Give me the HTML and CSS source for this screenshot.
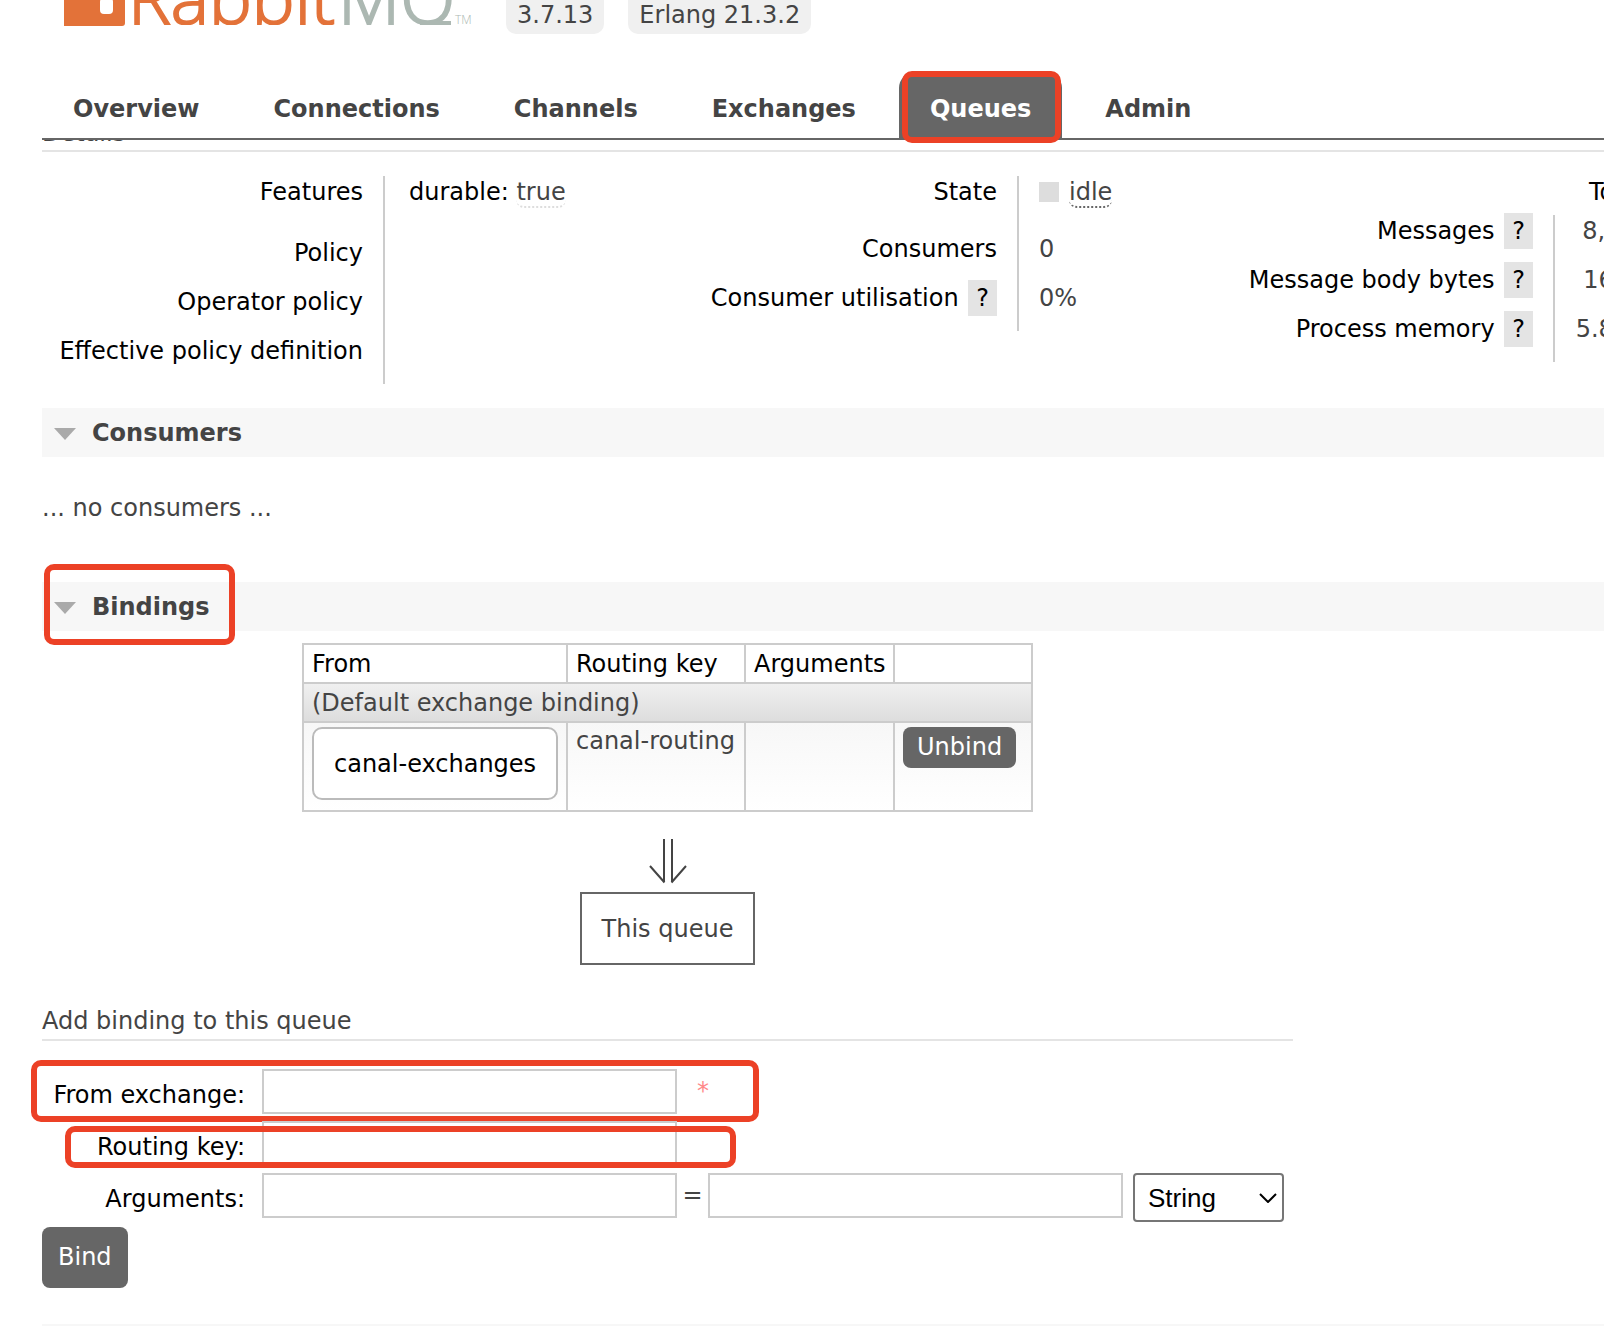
FILE: index.html
```html
<!DOCTYPE html>
<html lang="en">
<head>
<meta charset="utf-8">
<title>RabbitMQ Management</title>
<link rel="stylesheet" href="styles.css">
</head>
<body>
<header class="header">
  <div class="brand">
    <svg class="logo" viewBox="0 0 440 34" role="img" aria-label="RabbitMQ">
      <clipPath id="baseline"><path d="M0 0h440v25H0z"/></clipPath>
      <path fill="#e37239" d="M22 0h61v23q0 3-3 3H22z"/>
      <rect x="58" y="-2" width="13" height="16" rx="4" fill="#fff"/>
      <g clip-path="url(#baseline)">
        <text class="logo-word" x="86" y="24"><tspan class="logo-rabbit">Rabbit</tspan><tspan class="logo-mq" x="296">MQ</tspan></text>
      </g>
      <path class="logo-tail" d="M378 23h31"/>
      <text class="logo-tm" x="413" y="24">TM</text>
    </svg>
    <span class="version">3.7.13</span>
    <span class="version">Erlang 21.3.2</span>
  </div>
  <nav class="tabs">
    <a class="tab" href="#overview">Overview</a>
    <a class="tab" href="#connections">Connections</a>
    <a class="tab" href="#channels">Channels</a>
    <a class="tab" href="#exchanges">Exchanges</a>
    <a class="tab tab-selected" href="#queues">Queues<span class="mark mark-tab"></span></a>
    <a class="tab" href="#admin">Admin</a>
  </nav>
</header>
<main class="main">
  <h3 class="details-title"><span>Details</span></h3>
  <div class="facts-row">
    <table class="facts facts-policy">
      <tr><th>Features</th><td>durable: <abbr>true</abbr></td></tr>
      <tr><th>Policy</th><td></td></tr>
      <tr><th>Operator policy</th><td></td></tr>
      <tr><th>Effective policy definition</th><td></td></tr>
    </table>
    <table class="facts facts-state">
      <tr><th>State</th><td><span class="swatch"></span><abbr class="strong">idle</abbr></td></tr>
      <tr><th>Consumers</th><td>0</td></tr>
      <tr><th>Consumer utilisation <span class="help">?</span></th><td>0%</td></tr>
    </table>
    <table class="facts facts-totals">
      <thead><tr><td></td><th>Total</th></tr></thead>
      <tbody>
        <tr><th>Messages <span class="help">?</span></th><td>8,192</td></tr>
        <tr><th>Message body bytes <span class="help">?</span></th><td>16MB</td></tr>
        <tr><th>Process memory <span class="help">?</span></th><td>5.8MB</td></tr>
      </tbody>
    </table>
  </div>

  <h2 class="section-title"><svg class="caret" viewBox="0 0 22 12"><path d="M0 0h22L11 12z"/></svg>Consumers</h2>
  <p class="empty">... no consumers ...</p>

  <h2 class="section-title"><svg class="caret" viewBox="0 0 22 12"><path d="M0 0h22L11 12z"/></svg>Bindings<span class="mark mark-bindings"></span></h2>
  <div class="bindings">
    <table class="list">
      <colgroup><col class="col-from"><col class="col-key"><col class="col-args"><col></colgroup>
      <thead><tr><th>From</th><th>Routing key</th><th>Arguments</th><th></th></tr></thead>
      <tbody>
        <tr class="default-row"><td colspan="4">(Default exchange binding)</td></tr>
        <tr class="binding-row">
          <td><a class="exchange" href="#canal-exchanges">canal-exchanges</a></td>
          <td>canal-routing</td>
          <td></td>
          <td><button class="button button-small" type="button">Unbind</button></td>
        </tr>
      </tbody>
    </table>
    <svg class="arrow" viewBox="0 0 38 46"><path d="M15 0v43M23 0v43M1 27l14.500 16.500M37 27L22.500 43.500"/></svg>
    <div class="queue">This queue</div>
  </div>

  <form class="bind-form">
    <h3 class="form-title">Add binding to this queue</h3>
    <div class="field">
      <label for="source">From exchange:</label>
      <input id="source" type="text">
      <span class="required">*</span>
      <span class="mark mark-source"></span>
    </div>
    <div class="field">
      <label for="key">Routing key:</label>
      <input id="key" type="text">
      <span class="mark mark-key"></span>
    </div>
    <div class="field">
      <label for="argument">Arguments:</label>
      <input id="argument" type="text">
      <span class="equals">=</span>
      <input aria-label="Argument value" type="text">
      <span class="select-wrap">
        <select aria-label="Argument type"><option>String</option><option>Number</option><option>Boolean</option><option>List</option></select>
        <svg class="chevron" viewBox="0 0 18 10"><path d="M1 1l8 8 8-8"/></svg>
      </span>
    </div>
    <button class="button button-large" type="button">Bind</button>
  </form>
  <div class="next-section"></div>
</main>
</body>
</html>
```
FILE: styles.css
```css
* { box-sizing: border-box; }
body {
  margin: 0;
  overflow: hidden;
  background: #fff;
  color: #444;
  font: 24px/29px "DejaVu Sans", sans-serif;
}
a { color: inherit; text-decoration: none; }
h2, h3, p { margin: 0; font-size: 24px; }
h3 { font-weight: normal; }

.header { margin-left: 42px; border-bottom: 2px solid #666; }
.brand { display: flex; gap: 24px; height: 34px; }
.logo { width: 440px; height: 34px; flex: none; }
.logo-word { font: 300 72px "Open Sans", sans-serif; stroke-width: 2; }
.logo-rabbit { fill: #e37239; stroke: #e37239; }
.logo-mq { fill: #acb8b2; stroke: #acb8b2; }
.logo-tail { stroke: #acb8b2; stroke-width: 4; }
.logo-tm { font: 300 12px "Open Sans", sans-serif; fill: #acb8b2; }
.version {
  padding: 1px 11px 4px;
  border-radius: 0 0 10px 10px;
  background: #f0f0f0;
}

.tabs { display: flex; gap: 12px; margin-top: 38px; }
.tab {
  position: relative;
  padding: 23px 31px 14px;
  font-weight: bold;
}
.tab-selected {
  border-radius: 16px 16px 0 0;
  background: #666;
  color: #fff;
}

.mark {
  position: absolute;
  border: 6px solid #ec4126;
  border-radius: 10px;
  pointer-events: none;
}
.mark-tab { inset: -1px 1px -5px 3px; }
.mark-bindings { left: 2px; top: -18px; width: 191px; height: 81px; }
.mark-source { left: -11px; top: -9px; width: 728px; height: 62px; }
.mark-key { left: 23px; top: 5px; width: 671px; height: 42px; }

.main { margin-left: 42px; }
.details-title {
  display: flex;
  align-items: flex-end;
  height: 12px;
  overflow: hidden;
  padding-bottom: 2px;
  border-bottom: 2px solid #e4e4e4;
}
.facts-row {
  display: grid;
  grid-template-columns: 600px 570px 467px;
  align-items: start;
  margin: 24px 0;
}
.facts {
  justify-self: start;
  border-collapse: separate;
  border-spacing: 0;
  white-space: nowrap;
}
.facts th {
  width: 343px;
  padding: 11px 20px 9px 0;
  border-right: 2px solid #ccc;
  color: #000;
  font-weight: normal;
  text-align: right;
  vertical-align: top;
}
.facts td { padding: 11px 0 9px 20px; vertical-align: top; }
.facts tr:first-child > * { padding-top: 2px; padding-bottom: 17px; }
.facts tr:last-child > * { padding-bottom: 18px; }
.facts-policy td { padding-left: 24px; color: #000; }
.facts-policy tr:first-child td { padding-bottom: 21px; }
.facts-state th { width: 377px; }
.facts-totals tbody td { text-align: right; padding-right: 28px; }
.facts-totals thead tr:first-child > * { padding: 2px 0 8px; }
.facts-totals thead th { width: 124px; border: 0; text-align: center; }
.facts-totals tbody tr:first-child > * { padding-bottom: 9px; }
abbr {
  border-bottom: 2px dotted #ddd;
  border-radius: 8px;
  color: #444;
}
abbr.strong { border-color: #666; }
.swatch {
  display: inline-block;
  width: 20px;
  height: 20px;
  margin-right: 10px;
  background: #ddd;
  vertical-align: -2px;
}
.help { margin-left: 2px; padding: 4px 8px; background: #e4e4e4; }

.section-title {
  position: relative;
  display: flex;
  align-items: center;
  gap: 16px;
  padding: 11px 12px 9px;
  background: #f7f7f7;
}
.caret { width: 22px; height: 12px; fill: #aaa; }
.empty { padding: 37px 0 59px; }

.bindings {
  display: flex;
  flex-direction: column;
  align-items: center;
  width: 731px;
  margin: 12px 0 0 260px;
}
.list { width: 100%; border-collapse: collapse; table-layout: fixed; }
.col-from { width: 264px; }
.col-key { width: 178px; }
.col-args { width: 149px; }
.list th, .list td {
  padding: 5px 8px 3px;
  border: 2px solid #ccc;
  text-align: left;
  vertical-align: top;
  font-weight: normal;
}
.list th { color: #000; }
.default-row { background: linear-gradient(#f0f0f0, #ddd); }
.binding-row { background: linear-gradient(#f7f7f7, #fff); }
.list .binding-row td { padding-top: 4px; padding-bottom: 10px; }
.exchange {
  display: block;
  padding: 21px 20px 19px;
  border: 2px solid #bbb;
  border-radius: 10px;
  background: #fff;
  color: #000;
  white-space: nowrap;
}
.button {
  display: block;
  border: 0;
  border-radius: 8px;
  background: #666;
  color: #fff;
  font: inherit;
}
.button-small { padding: 6px 14px; }
.button-large { margin-top: 2px; padding: 16px; }
.arrow {
  width: 38px;
  height: 46px;
  margin: 27px 0 7px;
  fill: none;
  stroke: #444;
  stroke-width: 2;
}
.queue { padding: 21px 20px 19px; border: 2px solid #666; }

.bind-form { width: 1251px; margin-top: 42px; }
.form-title {
  margin-bottom: 28px;
  padding-bottom: 3px;
  border-bottom: 2px solid #e4e4e4;
}
.field { position: relative; display: flex; height: 52px; }
.field label {
  width: 203px;
  margin-right: 17px;
  padding-top: 12px;
  color: #000;
  text-align: right;
}
.field input {
  width: 415px;
  height: 45px;
  border: 2px solid #ccc;
  background: #fff;
  font: inherit;
}
.required { padding: 8px 20px; color: #f88; }
.equals { width: 31px; padding-top: 8px; text-align: center; }
.select-wrap { position: relative; width: 151px; height: 49px; margin-left: 10px; }
.select-wrap select {
  appearance: none;
  width: 100%;
  height: 100%;
  padding: 0 13px;
  border: 2px solid #767676;
  border-radius: 4px;
  background: #fff;
  color: #000;
  font: 26px "Liberation Sans", sans-serif;
}
.chevron {
  position: absolute;
  right: 7px;
  top: 20px;
  width: 18px;
  height: 10px;
  fill: none;
  stroke: #000;
  stroke-width: 2;
  pointer-events: none;
}
.next-section { height: 49px; margin-top: 36px; background: #f7f7f7; }
```
